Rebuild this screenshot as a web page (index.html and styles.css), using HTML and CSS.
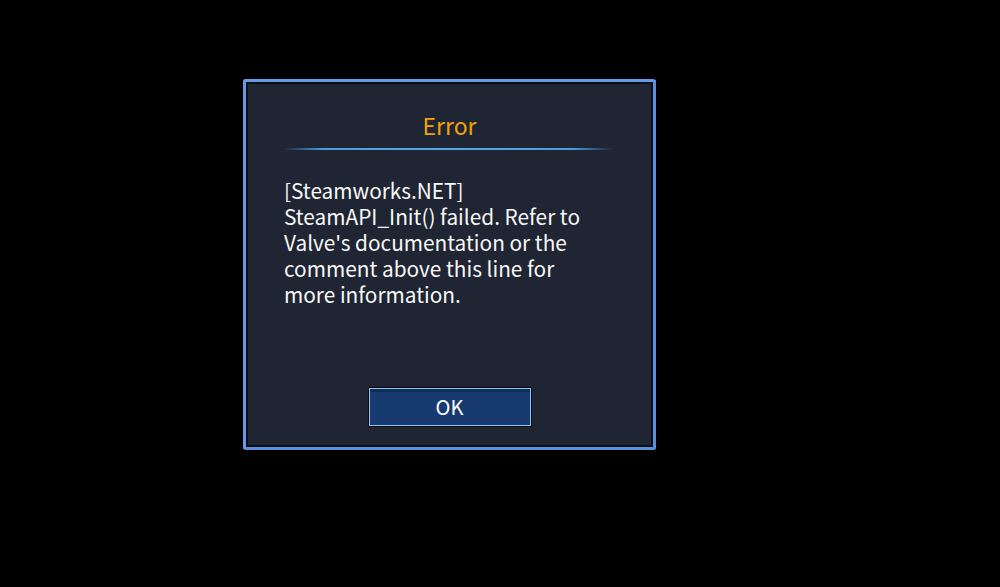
FILE: index.html
```html
<!DOCTYPE html>
<html lang="en">
<head>
<meta charset="utf-8">
<title>Error</title>
<link rel="stylesheet" href="styles.css">
</head>
<body>
<div class="stage">
  <div class="dialog">
    <div class="panel">
      <h1 class="title">Error</h1>
      <div class="divider"></div>
      <p class="message">[Steamworks.NET] SteamAPI_Init() failed. Refer to Valve's documentation or the comment above this line for more information.</p>
      <div class="actions">
        <button class="ok-btn" type="button">OK</button>
      </div>
    </div>
  </div>
</div>
</body>
</html>
```

FILE: styles.css
```css
html, body {
  margin: 0;
  padding: 0;
  background: #000;
}

body {
  width: 1000px;
  height: 587px;
  overflow: hidden;
  font-family: "Noto Sans CJK JP", "Noto Sans", sans-serif;
}

.stage {
  padding: 79px 0 0 243px;
}

.dialog {
  width: 413px;
  height: 371px;
  box-sizing: border-box;
  border: 3px solid #5b8fdc;
  border-top-color: #659be6;
  border-left-color: #659be6;
  border-radius: 3px;
  background: #0c0f15;
}

.panel {
  height: 100%;
  box-sizing: border-box;
  border: 2px solid #0c0f15;
  background: #1f2532;
  display: flex;
  flex-direction: column;
  padding: 25px 0 18px 36px;
}

.title {
  margin: 0;
  padding-right: 36px;
  text-align: center;
  font-size: 23px;
  font-weight: 400;
  color: #f0a30a;
  line-height: 33px;
}

.divider {
  height: 2px;
  width: 330px;
  margin: 6px 0 0 -1px;
  background: linear-gradient(to right, rgba(70,150,225,0) 0%, #4c9be0 12%, #5aa8ec 50%, #4c9be0 88%, rgba(70,150,225,0) 100%);
}

.message {
  margin: 27px 0 0 0;
  width: 310px;
  font-size: 20.8px;
  line-height: 26px;
  color: #f8f8f8;
}

.actions {
  margin-top: auto;
  display: flex;
  justify-content: center;
  padding-right: 36px;
}

.ok-btn {
  width: 164px;
  height: 40px;
  box-sizing: border-box;
  border: 1px solid #05070b;
  background: #173a70;
  box-shadow: inset 0 0 0 1px #8ccbf0, inset 0 3px 0 1px #122d58;
  color: #ffffff;
  font-family: "Noto Sans CJK JP", "Noto Sans", sans-serif;
  font-size: 20px;
  line-height: 36px;
  padding: 0;
  cursor: pointer;
}
```
